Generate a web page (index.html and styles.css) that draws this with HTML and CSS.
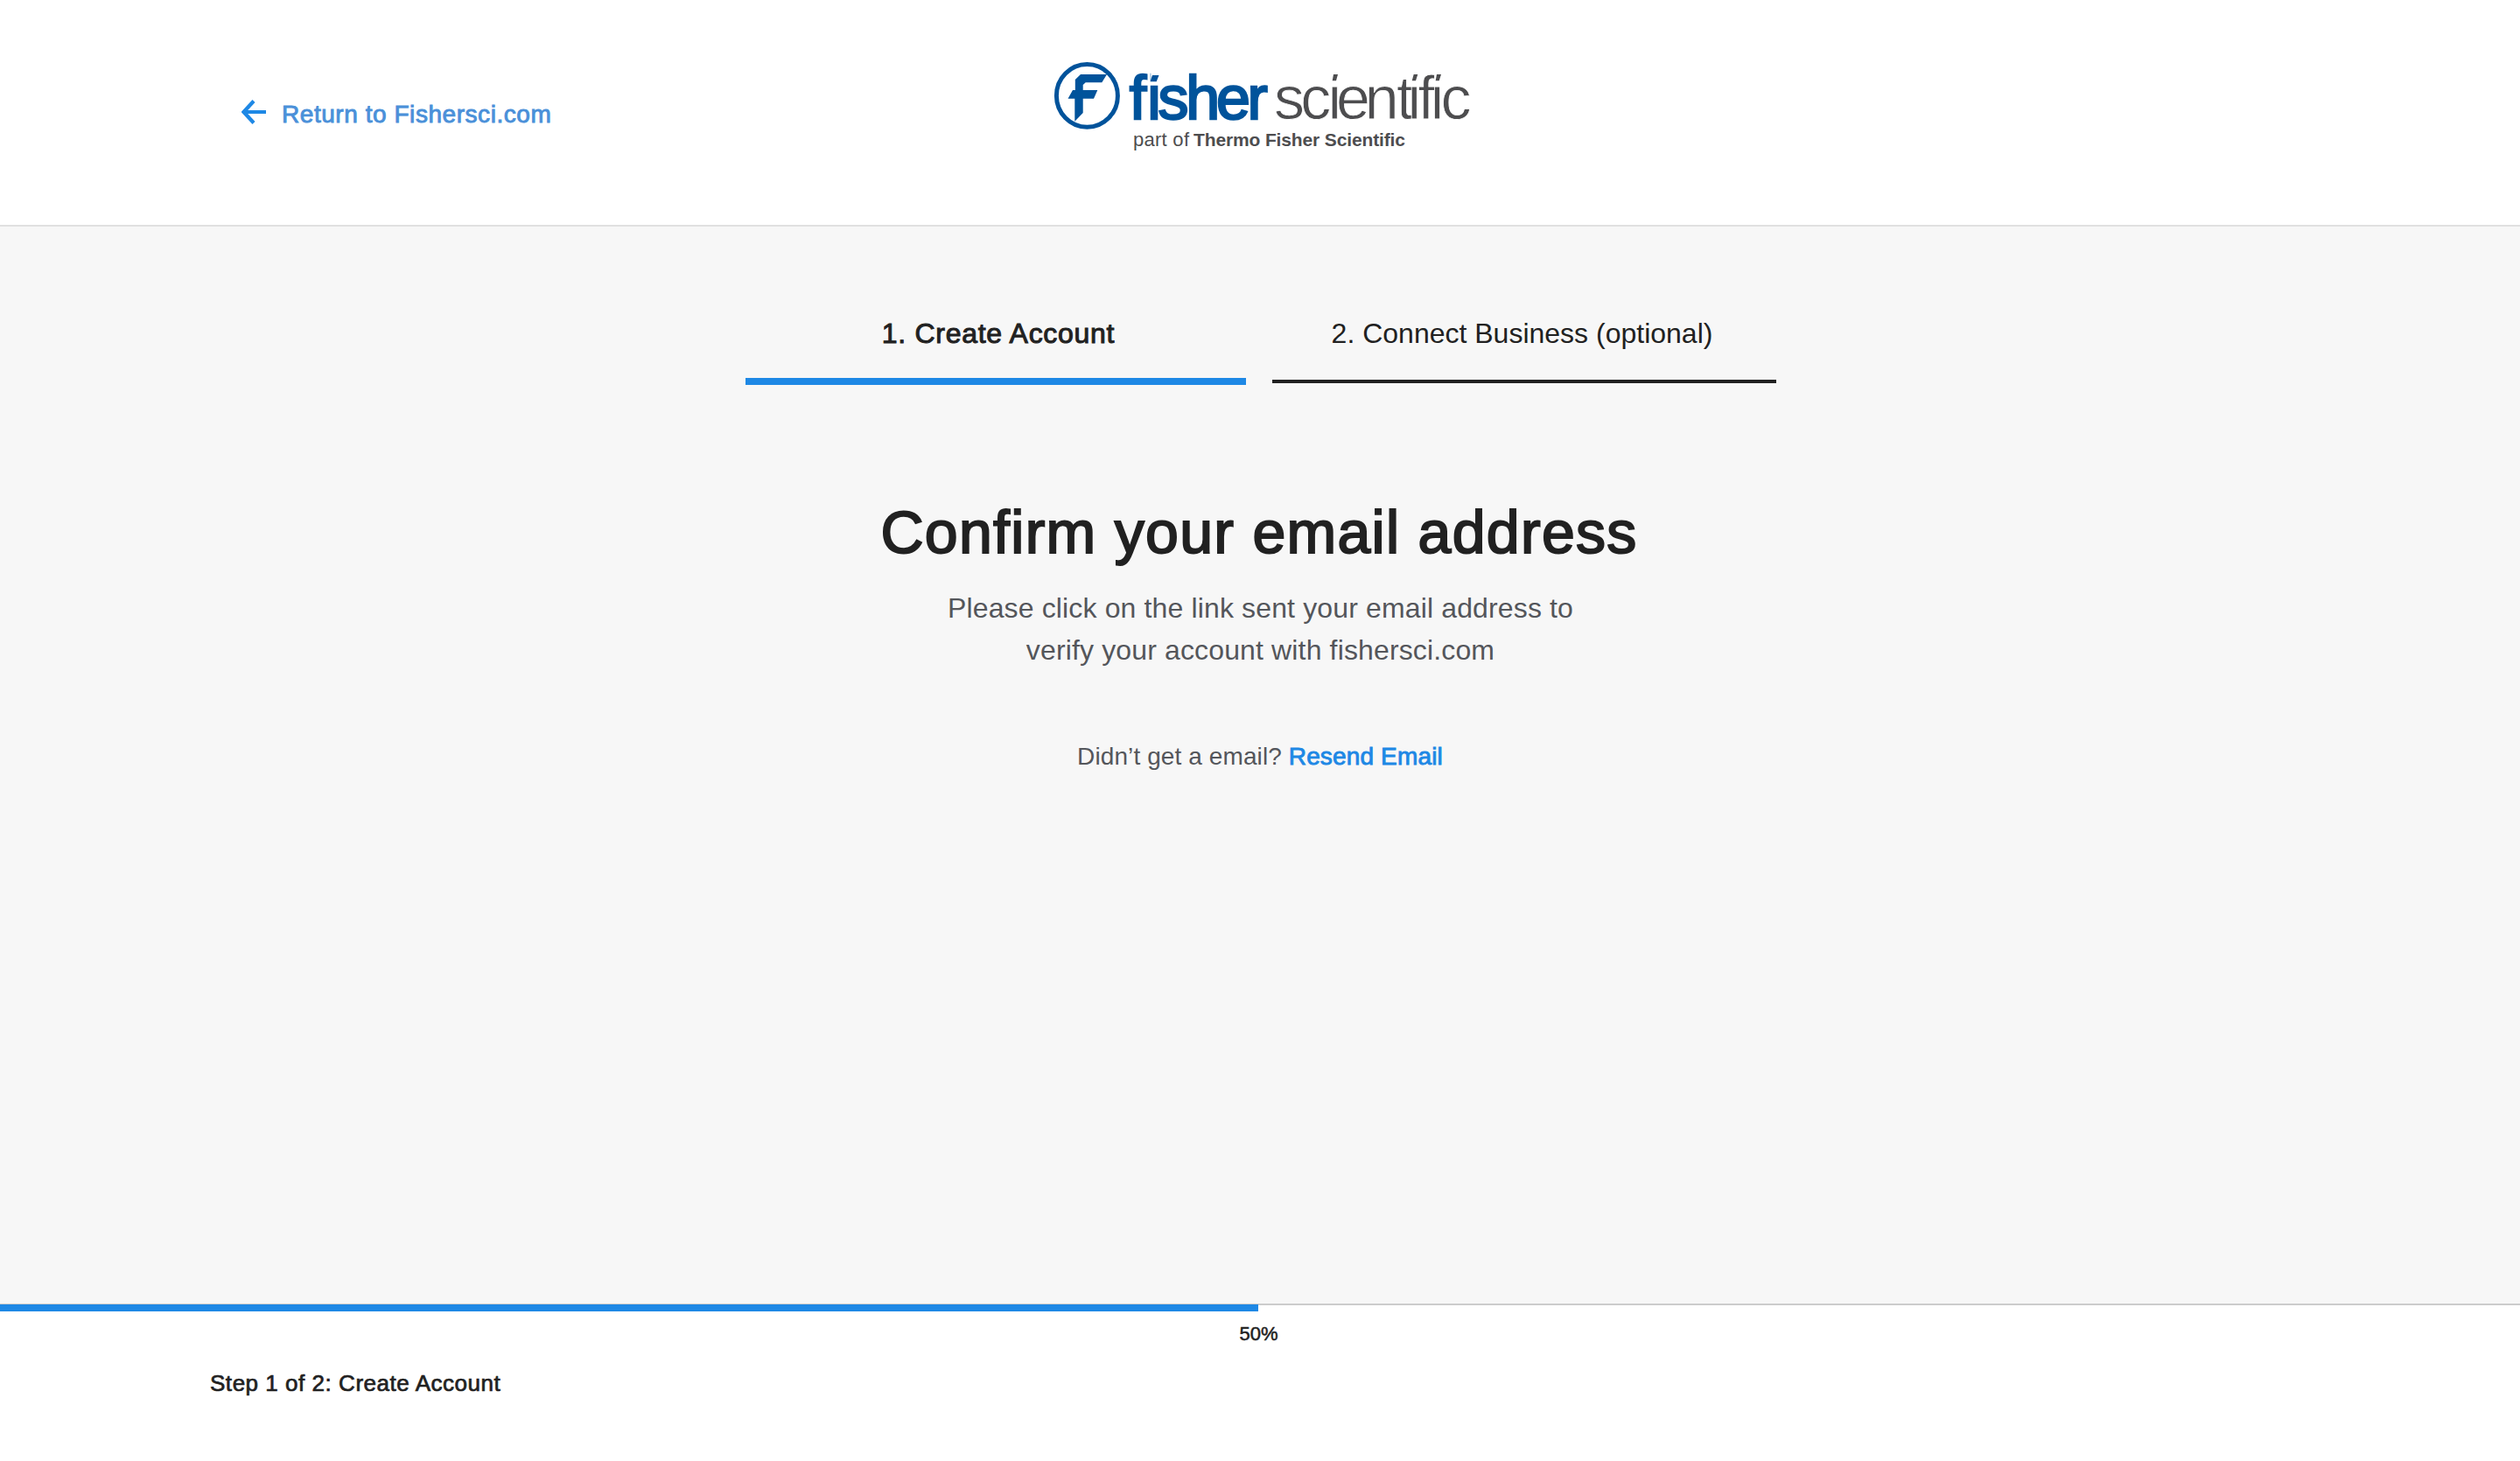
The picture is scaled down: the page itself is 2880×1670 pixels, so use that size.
FILE: index.html
```html
<!DOCTYPE html>
<html lang="en">
<head>
  <meta charset="UTF-8">
  <title>Fisher Scientific - Confirm your email address</title>
  <meta name="viewport" content="width=device-width, initial-scale=1.0">
  <link rel="stylesheet" href="styles.css">
</head>
<body>
  <header class="top-bar">
    <a class="return-link" href="#">
      <svg class="arrow" viewBox="0 0 28 28" width="28" height="28">
        <path d="M14 1.5 L2.5 14 L14 26.5 M2 14 H28"/>
      </svg>
      <span>Return to Fishersci.com</span>
    </a>
    <svg class="logo" viewBox="0 0 490 120" width="490" height="120">
      <ellipse class="logo-ring" cx="42.4" cy="49.4" rx="35" ry="35.8"/>
      <path class="logo-mark" d="M35 25 H65 L59.3 34.2 H40.7 L37.7 37 V43 H54.3 L50 52.7 H37.7 V69 L28.3 78.7 V52.7 H20.5 L26 43 H28.8 V31 Z"/>
      <text class="logo-fisher" x="90.8 111.2 123.5 155.3 190 225.5" y="76">fisher</text>
      <text class="logo-scientific" x="256 286.3 317.5 327 359.8 396 408.5 420.5 434.8 446.5" y="76">scientific</text>
      <!-- slanted dots over the i's -->
      <path class="logo-dot-gap" d="M115.2 22 H125 V36 H115.2 Z M320 22 H331 V36 H320 Z M411 22 H422 V36 H411 Z M439.8 22 H449 V36 H439.8 Z"/>
      <path class="logo-mark" d="M117 26 H124.5 L121.7 33.3 H114.5 Z"/>
      <path class="logo-dots" d="M324 25 H329 L327 32.3 H322.7 Z M415.7 25 H420.3 L418 32.3 H413.7 Z M442 25 H447 L444.7 32.3 H440.7 Z"/>
      <text class="logo-part" x="95" y="106.5" textLength="64">part of</text>
      <text class="logo-thermo" x="164" y="106.5" textLength="242">Thermo Fisher Scientific</text>
    </svg>
  </header>

  <main class="main-content">
    <nav class="steps">
      <div class="step active">1. Create Account</div>
      <div class="step">2. Connect Business (optional)</div>
    </nav>
    <h1>Confirm your email address</h1>
    <p class="message">Please click on the link sent your email address to<br>verify your account with fishersci.com</p>
    <p class="resend">Didn’t get a email? <a href="#">Resend Email</a></p>
  </main>

  <footer class="footer">
    <div class="progress"><div class="progress-bar" style="width:1438px"></div></div>
    <div class="percent">50%</div>
    <div class="step-label">Step 1 of 2: Create Account</div>
  </footer>
</body>
</html>
```
FILE: styles.css
```css
html, body {
  height: 100%;
  margin: 0;
}
body {
  display: flex;
  flex-direction: column;
  font-family: "Liberation Sans", Arial, sans-serif;
  background: #fff;
  color: #212121;
}
a {
  color: #1e88e5;
  text-decoration: none;
}
/* Header */
.top-bar {
  box-sizing: border-box;
  height: 259px;
  flex: none;
  display: grid;
  grid-template-columns: 1200px 490px 1fr;
  align-items: start;
  border-bottom: 2px solid #e0e0e0;
}
.return-link {
  display: flex;
  align-items: flex-start;
  gap: 18px;
  padding: 114px 0 0 276px;
  font-size: 28px;
  line-height: 33px;
  letter-spacing: 0.55px;
  color: #4a90d9;
  -webkit-text-stroke: 0.9px #4a90d9;
}
.arrow path {
  fill: none;
  stroke: #1e88e5;
  stroke-width: 4.2;
}
/* Logo */
.logo {
  margin-top: 60px;
}
.logo-ring {
  fill: none;
  stroke: #00539b;
  stroke-width: 5;
}
.logo-mark {
  fill: #00539b;
}
.logo-fisher {
  font-size: 70px;
  fill: #00539b;
  stroke: #00539b;
  stroke-width: 2.4px;
}
.logo-scientific {
  font-size: 70px;
  fill: #4d4d4f;
  stroke: #fff;
  stroke-width: 0.8px;
}
.logo-dot-gap {
  fill: #fff;
}
.logo-dots {
  fill: #4d4d4f;
}
.logo-part, .logo-thermo {
  font-size: 21px;
  fill: #4d4d4f;
}
.logo-part {
  font-size: 22px;
}
.logo-thermo {
  font-weight: 700;
}
/* Main */
.main-content {
  box-sizing: border-box;
  height: 1231px;
  flex: none;
  padding-top: 104px;
  background: #f7f7f7;
  text-align: center;
}
.steps {
  display: grid;
  grid-template-columns: 572px 576px;
  gap: 30px;
  padding-left: 852px;
}
.step {
  box-sizing: border-box;
  height: 75px;
  padding-right: 5px;
  font-size: 32px;
  line-height: 37px;
  border-bottom: 4px solid #212121;
}
.step.active {
  height: 77px;
  padding: 0 0 0 6px;
  letter-spacing: 0.7px;
  border-bottom: 8px solid #1e88e5;
  -webkit-text-stroke: 1px #212121;
}
h1 {
  margin: 129px 2px 0 0;
  font-size: 68px;
  font-weight: 400;
  line-height: 78px;
  letter-spacing: 1.3px;
  -webkit-text-stroke: 2px #212121;
}
.message {
  margin: 24px 0 0 1px;
  font-size: 32px;
  line-height: 48px;
  letter-spacing: 0.14px;
  color: #54565b;
}
.resend {
  margin: 82px 0 0;
  font-size: 28px;
  line-height: 32px;
  letter-spacing: 0.1px;
  color: #54565b;
}
.resend a {
  letter-spacing: 0.15px;
  -webkit-text-stroke: 0.9px #1e88e5;
}
/* Footer */
.footer {
  flex: 1;
}
.progress {
  height: 9px;
  box-sizing: border-box;
  border-top: 2px solid #ccc;
}
.progress-bar {
  height: 8px;
  margin-top: -1px;
  background: #1e88e5;
}
.percent {
  margin: 13px 3px 0 0;
  font-size: 22px;
  line-height: 26px;
  text-align: center;
  -webkit-text-stroke: 0.5px #212121;
}
.step-label {
  margin: 28px 0 0 240px;
  font-size: 26px;
  line-height: 30px;
  letter-spacing: 0.53px;
  -webkit-text-stroke: 0.7px #212121;
}
```
